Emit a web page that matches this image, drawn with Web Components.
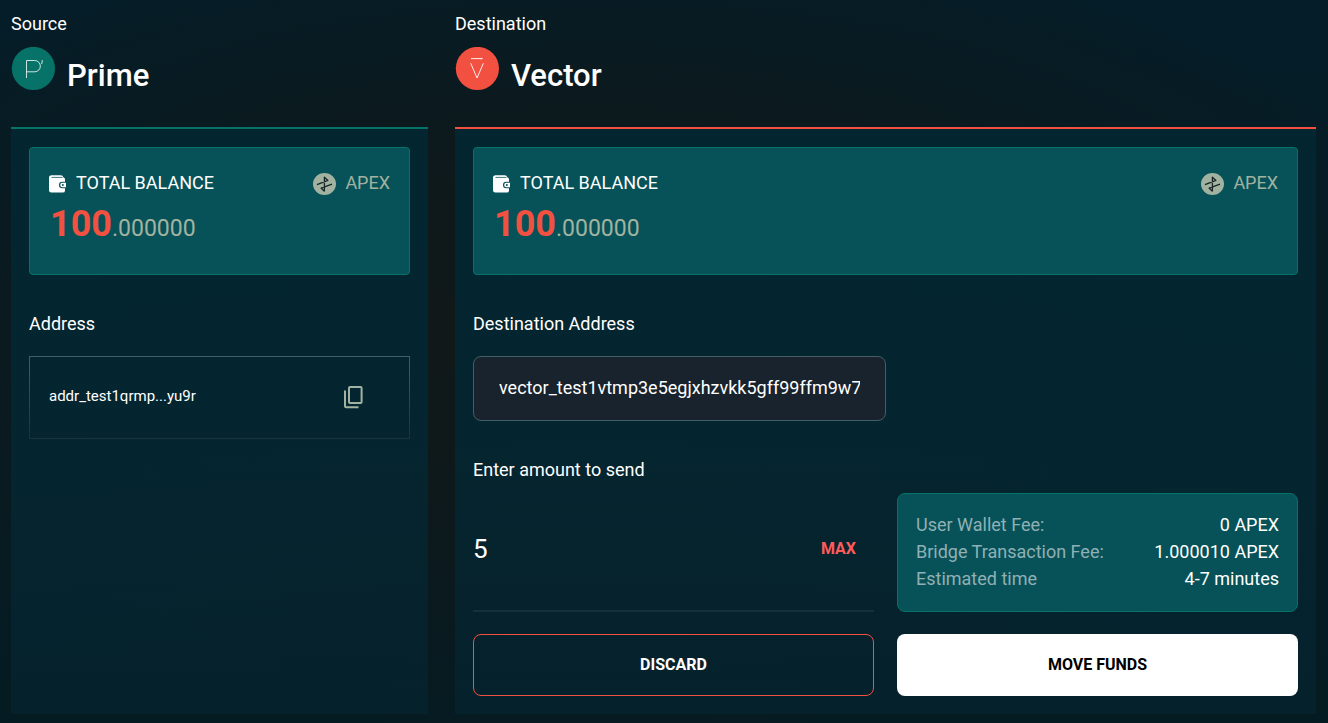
<!DOCTYPE html>
<html lang="en">
<head>
<meta charset="utf-8">
<meta name="viewport" content="width=device-width, initial-scale=1">
<title>Bridge</title>
<style>
body {
  margin: 0;
  min-height: 100vh;
  font-family: Roboto, "Liberation Sans", sans-serif;
  font-size: 18px;
  line-height: 24px;
  color: #fff;
  background:
    radial-gradient(ellipse 66% 56% at 45% 46%, #121817 0%, rgba(15, 24, 25, 0.75) 50%, rgba(5, 28, 38, 0) 100%),
    linear-gradient(#051d28, #051b22);
}
</style>
</head>
<body>
<bridge-page>
  <chain-column slot="source" label="Source" name="Prime" accent="#077368">
    <chain-logo slot="logo" kind="prime"></chain-logo>
    <balance-card whole="100" fraction=".000000"></balance-card>
    <field-group label="Address">
      <address-box value="addr_test1qrmp...yu9r"></address-box>
    </field-group>
  </chain-column>
  <chain-column slot="destination" label="Destination" name="Vector" accent="#f25041">
    <chain-logo slot="logo" kind="vector"></chain-logo>
    <balance-card whole="100" fraction=".000000"></balance-card>
    <transfer-form address="vector_test1vtmp3e5egjxhzvkk5gff99ffm9w7xq2l" amount="5">
      <fee-summary slot="fees"></fee-summary>
    </transfer-form>
  </chain-column>
</bridge-page>

<script>
const define = (name, render) => customElements.define(name, class extends HTMLElement {
  connectedCallback() {
    if (this.shadowRoot) return;
    const template = document.createElement('template');
    template.innerHTML = render(key => this.getAttribute(key) || '');
    this.attachShadow({ mode: 'open' }).append(template.content.cloneNode(true));
  }
});

define('bridge-page', () => `
  <style>
    :host {
      display: grid;
      grid-template-columns: repeat(3, 1fr);
      column-gap: 27px;
      padding: 12px 12px 9px 11px;
    }
    .destination { grid-column: span 2; }
    section { display: grid; min-width: 0; }
  </style>
  <section><slot name="source"></slot></section>
  <section class="destination"><slot name="destination"></slot></section>`);

define('chain-column', get => `
  <style>
    :host { display: flex; flex-direction: column; min-width: 0; }
    .heading { display: flex; gap: 12px; height: 80px; margin-top: 11px; }
    h2 { margin: 10px 0 0; font-size: 31px; line-height: 38px; font-weight: 500; }
    .panel {
      flex: 1;
      padding: 18px;
      border-top: 2px solid ${get('accent')};
      background: linear-gradient(rgba(3, 38, 49, 0.96), rgba(4, 38, 49, 0.96) 50%, rgba(5, 36, 48, 0.7));
    }
  </style>
  <div>${get('label')}</div>
  <div class="heading"><slot name="logo"></slot><h2>${get('name')}</h2></div>
  <div class="panel"><slot></slot></div>`);

define('chain-logo', get => `
  <style>
    :host { display: block; flex: none; }
    svg { display: block; }
  </style>
  ${get('kind') === 'prime' ? `
  <svg width="44" height="44" viewBox="0 0 44 44" fill="none" stroke="#fff" aria-hidden="true">
    <circle cx="22.4" cy="21.5" r="21.6" fill="#077368" stroke="none"/>
    <path d="M15.5 31V13.5H23.7a5.6 5.6 0 0 1 0 11.3H15.5M31.2 13q.3 2-.6 4" stroke-width=".8"/>
  </svg>` : `
  <svg width="44" height="44" viewBox="0 0 44 44" fill="none" stroke="#fff" aria-hidden="true">
    <circle cx="22.4" cy="21.5" r="21.6" fill="#f25041" stroke="none"/>
    <path d="M16 11.6H26.8M15.7 16.2L22 31L28.4 16.2" stroke-width=".9"/>
    <path d="M25.8 10.8L28.2 11.6L25.8 12.4Z" fill="#fff" stroke="none"/>
  </svg>`}`);

define('balance-card', get => `
  <style>
    :host {
      display: block;
      box-sizing: border-box;
      height: 128px;
      padding: 23px 19px 21px;
      border: 1px solid #077368;
      border-radius: 4px;
      background: #075258;
    }
    .top, .title, .token { display: flex; align-items: center; }
    .top { justify-content: space-between; }
    .title { gap: 8px; }
    .token { gap: 9px; color: #a1b3a0; }
    svg { display: block; padding-top: 2px; }
    .amount { display: flex; align-items: baseline; padding-left: 1px; margin-top: 8px; line-height: 42px; }
    .whole { font-size: 36px; font-weight: 700; color: #f25041; }
    .fraction { font-size: 23px; color: #a1b3a0; }
  </style>
  <div class="top">
    <div class="title">
      <svg width="19" height="20" viewBox="0 0 19 20" aria-hidden="true">
        <path fill="#fff" d="M3 1.2H11.8A2.6 2.6 0 0 1 14.3 3.2A2.2 2.2 0 0 1 16 5.4V7.8H13.2A3 3 0 0 0 13.2 14.2H16V16.2A2.3 2.3 0 0 1 13.7 18.6H2.3A2.3 2.3 0 0 1 0 16.2V3.7A2.5 2.5 0 0 1 3 1.2Z"/>
        <path d="M2.5 3.4H13.5" stroke="#075258" stroke-width=".8"/>
        <path fill="#fff" d="M13.4 8.8H17V13.2H13.4A2.2 2.2 0 0 1 13.4 8.8Z"/>
        <circle cx="13.8" cy="11" r="1" fill="#075258"/>
      </svg>
      <span>TOTAL BALANCE</span>
    </div>
    <div class="token">
      <svg width="23" height="22" viewBox="0 0 23 22" fill="none" aria-hidden="true">
        <ellipse cx="11.5" cy="11" rx="11.5" ry="11" fill="#a1b3a0"/>
        <path d="M11.4 18.4V4.2L14.9 7.4L4 11.7M19 11.2L8.2 15.2L11.4 18.4" stroke="#1b2426" stroke-width="1.3" stroke-linejoin="round"/>
      </svg>
      <span>APEX</span>
    </div>
  </div>
  <div class="amount"><span class="whole">${get('whole')}</span><span class="fraction">${get('fraction')}</span></div>`);

define('field-group', get => `
  <style>
    :host { display: block; margin-top: 37px; }
    .label { margin-bottom: 20px; }
  </style>
  <div class="label">${get('label')}</div>
  <slot></slot>`);

define('address-box', get => `
  <style>
    :host {
      display: flex;
      align-items: center;
      justify-content: space-between;
      box-sizing: border-box;
      height: 83px;
      padding: 0 44px 4px 20px;
      background:
        linear-gradient(#435e66, #17333b) left / 1px 100% no-repeat,
        linear-gradient(#435e66, #17333b) right / 1px 100% no-repeat,
        linear-gradient(#435e66, #435e66) top / 100% 1px no-repeat,
        linear-gradient(#17333b, #17333b) bottom / 100% 1px no-repeat;
      font-size: 15px;
    }
    button { display: block; padding: 2px 0 0; border: 0; background: none; cursor: pointer; }
    svg { display: block; }
  </style>
  <span>${get('value')}</span>
  <button type="button" aria-label="Copy address">
    <svg width="24" height="24" viewBox="0 0 24 24" fill="none" stroke="#a1b3a0" stroke-width="2">
      <rect x="7" y="2" width="12.6" height="16" rx="1"/>
      <path d="M3 5.5V21Q3 22.2 4.2 22.2H16.5"/>
    </svg>
  </button>`);

define('transfer-form', get => `
  <style>
    :host { display: block; margin-top: 37px; }
    form { margin: 0; }
    label { display: block; }
    input {
      box-sizing: border-box;
      margin: 0;
      font: inherit;
      color: inherit;
      outline: none;
    }
    .address {
      display: block;
      width: 50%;
      height: 65px;
      margin: 20px 0 37px;
      padding: 0 25px 3px;
      border: 1px solid #435e66;
      border-radius: 8px;
      background: #19232d;
    }
    .grid { display: grid; grid-template-columns: 1fr 1fr; gap: 22px 23px; margin-top: 11px; }
    .amount {
      display: flex;
      align-items: center;
      box-sizing: border-box;
      padding: 0 18px 6px 0;
      border-bottom: 2px solid #15303a;
    }
    .amount input { flex: 1; min-width: 0; padding: 0; border: 0; background: none; font-size: 26px; height: 32px; }
    button {
      font: inherit;
      font-size: 16px;
      font-weight: 700;
      cursor: pointer;
      border: 0;
      background: none;
    }
    .max { padding: 0; color: #ff5b5b; }
    .action { height: 62px; border-radius: 8px; }
    .discard { border: 1px solid #f25041; color: #fff; }
    .move { background: #fff; color: #000; }
  </style>
  <form>
    <label for="address">Destination Address</label>
    <input class="address" id="address" type="text" value="${get('address')}">
    <label for="amount">Enter amount to send</label>
    <div class="grid">
      <div class="amount">
        <input id="amount" type="text" inputmode="decimal" value="${get('amount')}">
        <button class="max" type="button">MAX</button>
      </div>
      <slot name="fees"></slot>
      <button class="action discard" type="button">DISCARD</button>
      <button class="action move" type="button">MOVE FUNDS</button>
    </div>
  </form>`);

define('fee-summary', () => `
  <style>
    :host {
      display: block;
      box-sizing: border-box;
      height: 119px;
      padding: 17px 18px;
      border: 1px solid #077368;
      border-radius: 8px;
      background: #075258;
    }
    dl { margin: 0; }
    div { display: flex; justify-content: space-between; line-height: 27px; }
    dt { color: #8fb0b5; }
    dd { margin: 0; }
  </style>
  <dl>
    <div><dt>User Wallet Fee:</dt><dd>0 APEX</dd></div>
    <div><dt>Bridge Transaction Fee:</dt><dd>1.000010 APEX</dd></div>
    <div><dt>Estimated time</dt><dd>4-7 minutes</dd></div>
  </dl>`);
</script>
</body>
</html>
